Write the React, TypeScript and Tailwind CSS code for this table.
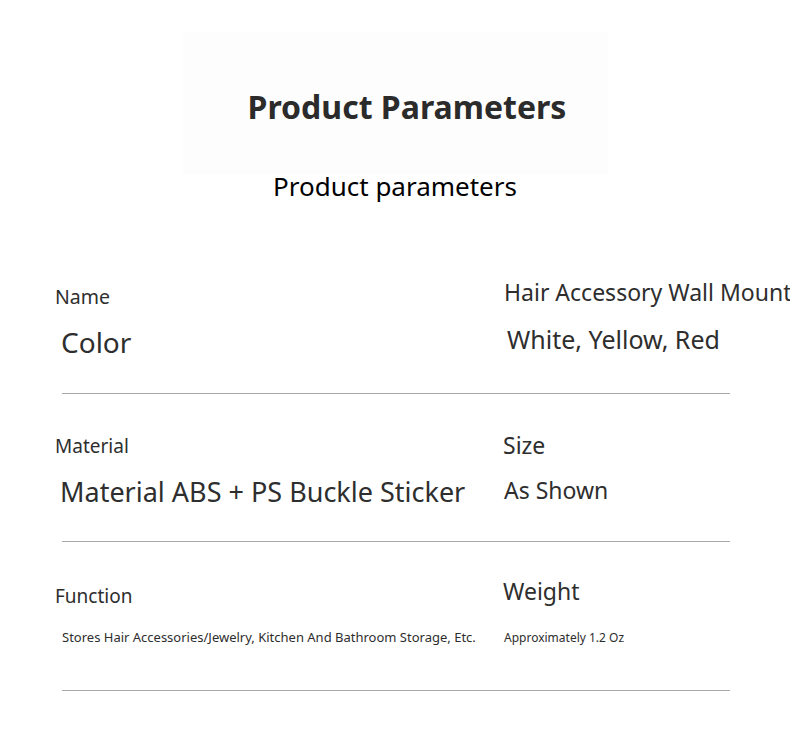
import React from "react";

export default function App() {
  return (
    <div className="w-[790px] h-[745px] overflow-hidden bg-white font-['Noto_Sans','Open_Sans',sans-serif] text-[#2e2e2e]">
      {/* header */}
      <div className="ml-[183px] mt-[32px] w-[425px] h-[143px] bg-[#fdfdfd] pt-[59px] pl-[23px] text-center">
        <div className="text-[32px] leading-none font-bold text-[#2b2b2b] whitespace-nowrap">Product Parameters</div>
      </div>
      <div className="mt-[-2px] flex justify-center">
        <div className="text-[26px] leading-none text-black whitespace-nowrap">Product parameters</div>
      </div>

      {/* row 1 */}
      <div className="mt-[52px] h-[142px] grid grid-cols-[448px_1fr]">
        <div className="flex flex-col">
          <div className="mt-[36px] ml-[55px] text-[19.5px] leading-none">Name</div>
          <div className="mt-[21px] ml-[61px] text-[28px] leading-none">Color</div>
        </div>
        <div className="flex flex-col">
          <div className="mt-[30px] ml-[56px] text-[23px] leading-none whitespace-nowrap">Hair Accessory Wall Mount</div>
          <div className="mt-[23px] ml-[59px] text-[25px] leading-none whitespace-nowrap">White, Yellow, Red</div>
        </div>
      </div>
      <div className="ml-[62px] w-[668px] h-px bg-[#a8a8a8]" />

      {/* row 2 */}
      <div className="h-[147px] grid grid-cols-[448px_1fr]">
        <div className="flex flex-col">
          <div className="mt-[43px] ml-[55px] text-[19px] leading-none">Material</div>
          <div className="mt-[22px] ml-[60px] text-[27px] leading-none whitespace-nowrap">Material ABS + PS Buckle Sticker</div>
        </div>
        <div className="flex flex-col">
          <div className="mt-[40px] ml-[55px] text-[23px] leading-none">Size</div>
          <div className="mt-[22px] ml-[56px] text-[23px] leading-none whitespace-nowrap">As Shown</div>
        </div>
      </div>
      <div className="ml-[62px] w-[668px] h-px bg-[#a8a8a8]" />

      {/* row 3 */}
      <div className="h-[148px] grid grid-cols-[448px_1fr]">
        <div className="flex flex-col">
          <div className="mt-[45px] ml-[55px] text-[19px] leading-none">Function</div>
          <div className="mt-[25px] ml-[62px] text-[13px] leading-none whitespace-nowrap">Stores Hair Accessories/Jewelry, Kitchen And Bathroom Storage, Etc.</div>
        </div>
        <div className="flex flex-col">
          <div className="mt-[38px] ml-[55px] text-[23px] leading-none">Weight</div>
          <div className="mt-[29px] ml-[56px] text-[12px] leading-none whitespace-nowrap">Approximately 1.2 Oz</div>
        </div>
      </div>
      <div className="ml-[62px] w-[668px] h-px bg-[#a8a8a8]" />
    </div>
  );
}
